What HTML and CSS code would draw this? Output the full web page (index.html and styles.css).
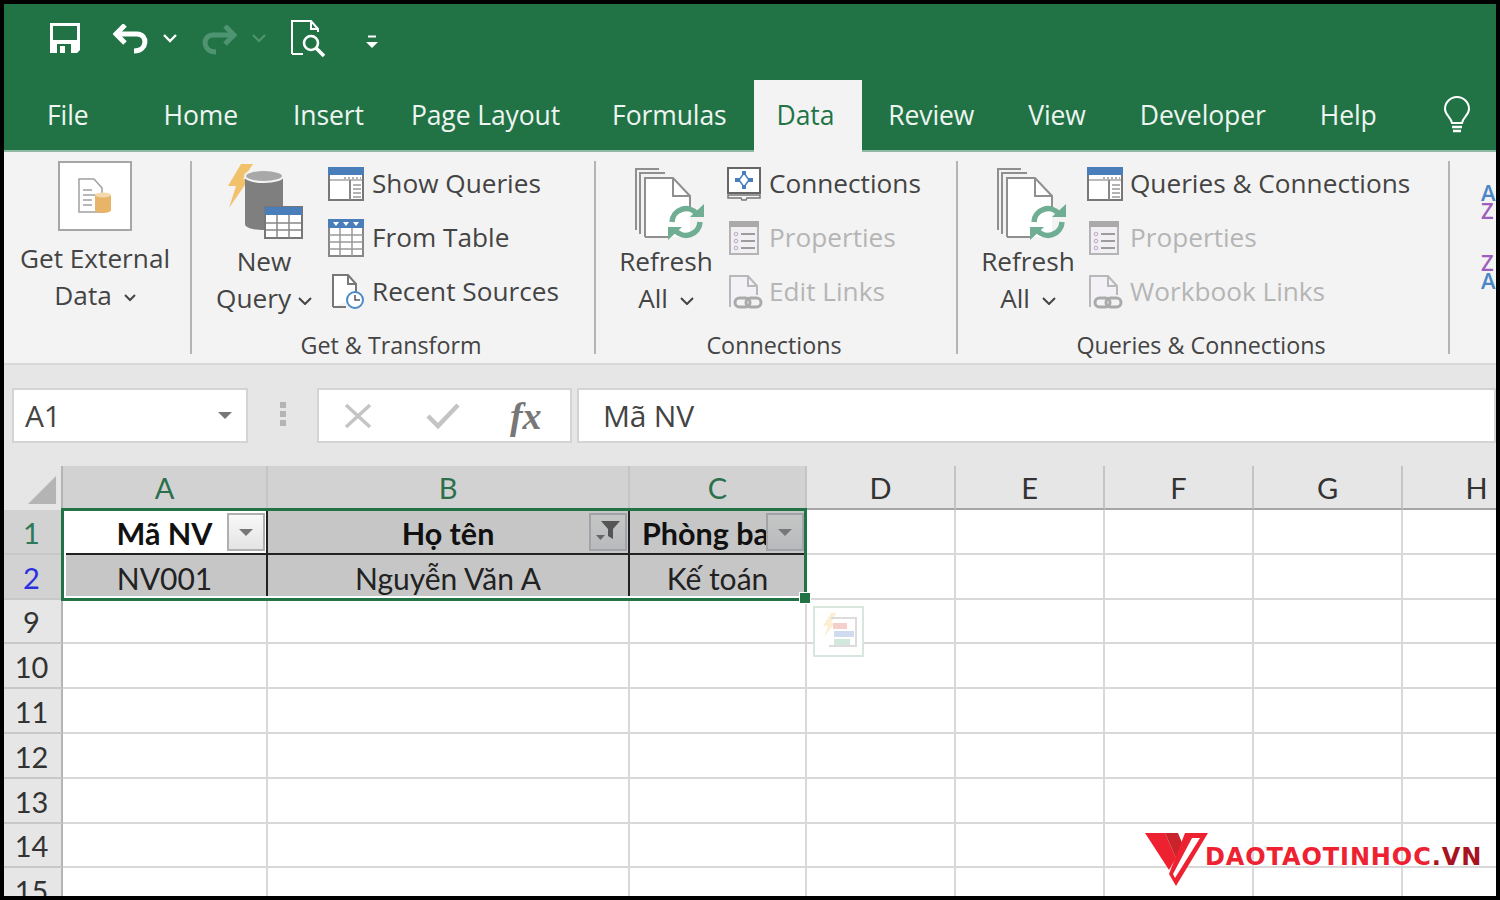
FILE: index.html
```html
<!DOCTYPE html>
<html lang="vi">

<head>
    <meta charset="UTF-8">
    <title>Excel - Data</title>
    <link rel="stylesheet" href="styles.css">
</head>

<body>
    <svg class="defs" width="0" height="0">
        <symbol id="refresh-doc" viewBox="0 0 72 72">
            <path d="M1 62V1H24M5 66V5H30" fill="none" stroke="#8f8f8f" stroke-width="2" />
            <path d="M10 69V10H38L55 28V69Z" fill="#fff" />
            <path d="M10 69V10H38L55 28V40M38 10V28H55M10 69H34" fill="none" stroke="#8f8f8f" stroke-width="2" />
            <path d="M37 54A14 14 0 0 1 62 46" fill="none" stroke="#6fae93" stroke-width="5.500" />
            <path d="M55 49H69V36Z" fill="#6fae93" />
            <path d="M65 54A14 14 0 0 1 40 62" fill="none" stroke="#6fae93" stroke-width="5.500" />
            <path d="M47 59H33V72Z" fill="#6fae93" />
        </symbol>
        <symbol id="queries" viewBox="0 0 36 34">
            <rect x="1" y="1" width="34" height="32" fill="#fff" stroke="#777" stroke-width="2" />
            <rect y="0" width="36" height="8" fill="#4a7ebb" />
            <path d="M2 13H34" stroke="#bbb" stroke-width="2" />
            <path d="M22 13V33" stroke="#888" stroke-width="2" />
            <path d="M25 18H33M25 22H33M25 26H33M25 30H33" stroke="#999" stroke-width="1.5" />
            <path d="M16 11H33" stroke="#999" stroke-width="1.5" stroke-dasharray="2 2" />
        </symbol>
        <symbol id="properties" viewBox="0 0 30 34">
            <rect x="1" y="1" width="28" height="32" fill="#f2eff4" stroke="#b4b4b4" stroke-width="2" />
            <rect width="30" height="6" fill="#aaa" />
            <path d="M12 13H26M12 20H26M12 27H26" stroke="#9c9c9c" stroke-width="2" />
            <circle cx="7" cy="13" r="1.8" fill="none" stroke="#b9a9c4" />
            <circle cx="7" cy="20" r="1.8" fill="none" stroke="#b9a9c4" />
            <circle cx="7" cy="27" r="1.8" fill="none" stroke="#b9a9c4" />
        </symbol>
        <symbol id="links" viewBox="0 0 34 34">
            <path d="M1 31V1H19L28 11V22H8V31Z" fill="#f4f1f6" />
            <path d="M1 32V1H19L28 11V20M19 1V11H28" fill="none" stroke="#b8b8b8" stroke-width="2" />
            <rect x="6" y="23" width="15" height="9" rx="4.5" fill="none" stroke="#aaa" stroke-width="3" />
            <rect x="17" y="23" width="15" height="9" rx="4.5" fill="none" stroke="#aaa" stroke-width="3" />
        </symbol>
    </svg>

    <div class="app">
        <div class="qat">
            <svg class="qat-save" width="30" height="30" viewBox="0 0 30 30">
                <path d="M0 0H30V27L27 30H0Z" fill="#fff" />
                <rect x="3" y="3" width="24" height="14" fill="#217346" />
                <rect x="7" y="21" width="14" height="9" fill="#217346" />
                <rect x="10" y="23" width="5" height="7" fill="#fff" />
            </svg>
            <svg class="qat-undo" width="36" height="30" viewBox="0 0 36 30">
                <path d="M3 10H24C35 10 35 27 21 27" fill="none" stroke="#fff" stroke-width="5" />
                <path d="M12 1L3 10L12 19" fill="none" stroke="#fff" stroke-width="5" />
            </svg>
            <svg class="chev qat-chev" width="14" height="9" viewBox="0 0 14 9">
                <path d="M1 1L7 7L13 1" fill="none" stroke="#fff" stroke-width="2.4" />
            </svg>
            <svg class="qat-redo" width="36" height="30" viewBox="0 0 36 30">
                <path d="M33 10H12C1 10 1 27 15 27" fill="none" stroke="#4f9470" stroke-width="5" />
                <path d="M24 1L33 10L24 19" fill="none" stroke="#4f9470" stroke-width="5" />
            </svg>
            <svg class="chev qat-chev-off" width="14" height="9" viewBox="0 0 14 9">
                <path d="M1 1L7 7L13 1" fill="none" stroke="#4f9470" stroke-width="2" />
            </svg>
            <svg class="qat-preview" width="38" height="38" viewBox="0 0 38 38">
                <path d="M1 34V1H20L27 9V12M20 1V9H27M1 34H12" fill="none" stroke="#fff" stroke-width="2" />
                <circle cx="20" cy="23" r="7" fill="none" stroke="#fff" stroke-width="2.6" />
                <path d="M25 28L33 36" stroke="#fff" stroke-width="3.5" />
            </svg>
            <svg class="qat-more" width="12" height="14" viewBox="0 0 12 14">
                <path d="M2 1.500H10" stroke="#fff" stroke-width="2" />
                <path d="M0 7H12L6 13Z" fill="#fff" />
            </svg>
        </div>

        <div class="tabs">
            <div class="tab tab-file">File</div>
            <div class="tab tab-home">Home</div>
            <div class="tab tab-insert">Insert</div>
            <div class="tab">Page Layout</div>
            <div class="tab">Formulas</div>
            <div class="tab active">Data</div>
            <div class="tab">Review</div>
            <div class="tab tab-nudge">View</div>
            <div class="tab tab-nudge">Developer</div>
            <div class="tab tab-nudge">Help</div>
            <svg class="bulb" width="28" height="40" viewBox="0 0 28 40">
                <path d="M9 27C8 21 2 19 2 13A12 12 0 0 1 26 13C26 19 20 21 19 27Z" fill="none" stroke="#fff" stroke-width="2" />
                <path d="M9 31H19M10 35H18" stroke="#fff" stroke-width="2.4" />
            </svg>
        </div>

        <div class="ribbon">
            <div class="group group-ext">
                <div class="group-body">
                    <div class="big-btn">
                        <div class="ext-box">
                            <svg width="34" height="36" viewBox="0 0 34 36">
                                <path d="M1 34V1H16L24 10V34Z" fill="#fff" stroke="#a0a0a0" stroke-width="1.500" />
                                <path d="M5 12H14M5 17H19M5 22H14M5 27H14" stroke="#a0a0a0" stroke-width="1.500" />
                                <path d="M17 17H33V32C33 36 17 36 17 32Z" fill="#e8b468" />
                                <ellipse cx="25" cy="17" rx="8" ry="2.500" fill="#f5d9ac" />
                            </svg>
                        </div>
                        <div class="big-label ext-label">Get External<br>Data <svg class="chev" width="12" height="8" viewBox="0 0 12 8"><path d="M1 1L6 6L11 1" fill="none" stroke="#444" stroke-width="2" /></svg></div>
                    </div>
                </div>
                <div class="group-label"></div>
            </div>

            <div class="group group-get">
                <div class="group-body">
                    <div class="big-btn">
                        <svg class="big-icon" width="78" height="78" viewBox="0 0 78 78">
                            <path d="M16 0H28L18 15H24L4 44L11 22H3Z" fill="#f1c26b" />
                            <path d="M20 12V60C20 68 58 68 58 60V12Z" fill="#7f7f7f" />
                            <ellipse cx="39" cy="12" rx="19" ry="6" fill="#a8a8a8" stroke="#f3f3f3" stroke-width="2" />
                            <rect x="40" y="43" width="37" height="31" fill="#fff" stroke="#777" stroke-width="2" />
                            <rect x="40" y="43" width="37" height="8" fill="#4a7ebb" />
                            <path d="M41 59H76M41 66H76M52 51V74M64 51V74" stroke="#888" stroke-width="1.500" />
                        </svg>
                        <div class="big-label">New<br>Query <svg class="chev" width="14" height="8" viewBox="0 0 14 8"><path d="M1 1L7 7L13 1" fill="none" stroke="#444" stroke-width="2" /></svg></div>
                    </div>
                    <div class="small-col">
                        <div class="small-item">
                            <span class="small-icon"><svg width="36" height="34"><use href="#queries" /></svg></span><span class="small-text">Show Queries</span>
                        </div>
                        <div class="small-item">
                            <span class="small-icon">
                                <svg width="36" height="38" viewBox="0 0 36 38">
                                    <rect x="1" y="1" width="34" height="36" fill="#fff" stroke="#888" stroke-width="2" />
                                    <rect width="36" height="9" fill="#4a7ebb" />
                                    <path d="M5 3H11L8 7ZM15 3H21L18 7ZM25 3H31L28 7Z" fill="#fff" />
                                    <path d="M1 16H35M1 23H35M1 30H35M12 9V37M24 9V37" stroke="#999" stroke-width="1.500" />
                                </svg>
                            </span><span class="small-text">From Table</span>
                        </div>
                        <div class="small-item">
                            <span class="small-icon">
                                <svg width="36" height="36" viewBox="0 0 36 36">
                                    <path d="M5 33V1H20L28 10V24" fill="#fff" stroke="#777" stroke-width="2" />
                                    <path d="M5 33H18M20 1V10H28" fill="none" stroke="#777" stroke-width="2" />
                                    <circle cx="27" cy="26" r="8" fill="#fff" stroke="#4a8cc7" stroke-width="2" />
                                    <path d="M27 21V26H32" fill="none" stroke="#555" stroke-width="1.500" />
                                </svg>
                            </span><span class="small-text">Recent Sources</span>
                        </div>
                    </div>
                </div>
                <div class="group-label">Get &amp; Transform</div>
            </div>

            <div class="group group-conn">
                <div class="group-body">
                    <div class="big-btn refresh-btn">
                        <svg class="big-icon" width="72" height="72"><use href="#refresh-doc" /></svg>
                        <div class="big-label">Refresh<br>All <svg class="chev" width="14" height="8" viewBox="0 0 14 8"><path d="M1 1L7 7L13 1" fill="none" stroke="#444" stroke-width="2" /></svg></div>
                    </div>
                    <div class="small-col">
                        <div class="small-item">
                            <span class="small-icon">
                                <svg width="36" height="34" viewBox="0 0 36 34">
                                    <rect x="1" y="1" width="32" height="25" fill="#fff" stroke="#666" stroke-width="2" />
                                    <path d="M1 28H33V31H20L19 33H15L14 31H1Z" fill="none" stroke="#777" stroke-width="1.500" />
                                    <path d="M17 6L22 13L17 20L12 13Z" fill="none" stroke="#4a7ebb" stroke-width="1.500" />
                                    <path d="M15 4H19V8H15ZM15 18H19V22H15ZM8 11H13V15H8ZM21 11H26V15H21Z" fill="#4a7ebb" />
                                </svg>
                            </span><span class="small-text">Connections</span>
                        </div>
                        <div class="small-item off">
                            <span class="small-icon"><svg class="off-icon" width="30" height="34"><use href="#properties" /></svg></span><span class="small-text">Properties</span>
                        </div>
                        <div class="small-item off">
                            <span class="small-icon"><svg class="off-icon" width="34" height="34"><use href="#links" /></svg></span><span class="small-text">Edit Links</span>
                        </div>
                    </div>
                </div>
                <div class="group-label">Connections</div>
            </div>

            <div class="group group-query">
                <div class="group-body">
                    <div class="big-btn refresh-btn">
                        <svg class="big-icon" width="72" height="72"><use href="#refresh-doc" /></svg>
                        <div class="big-label">Refresh<br>All <svg class="chev" width="14" height="8" viewBox="0 0 14 8"><path d="M1 1L7 7L13 1" fill="none" stroke="#444" stroke-width="2" /></svg></div>
                    </div>
                    <div class="small-col">
                        <div class="small-item">
                            <span class="small-icon"><svg width="36" height="34"><use href="#queries" /></svg></span><span class="small-text">Queries &amp; Connections</span>
                        </div>
                        <div class="small-item off">
                            <span class="small-icon"><svg class="off-icon" width="30" height="34"><use href="#properties" /></svg></span><span class="small-text">Properties</span>
                        </div>
                        <div class="small-item off">
                            <span class="small-icon"><svg class="off-icon" width="34" height="34"><use href="#links" /></svg></span><span class="small-text">Workbook Links</span>
                        </div>
                    </div>
                </div>
                <div class="group-label">Queries &amp; Connections</div>
            </div>

            <div class="sort-col">
                <div class="sort"><span class="blue">A</span><span class="purple">Z</span></div>
                <div class="sort"><span class="purple">Z</span><span class="blue">A</span></div>
            </div>
        </div>

        <div class="formula-row">
            <div class="name-box">A1<span class="drop"></span></div>
            <div class="grip"><i></i><i></i><i></i></div>
            <div class="fx-box">
                <svg width="30" height="26" viewBox="0 0 30 26">
                    <path d="M3 2L27 24M27 2L3 24" stroke="#c4c4c4" stroke-width="3.500" />
                </svg>
                <svg width="34" height="28" viewBox="0 0 34 28">
                    <path d="M2 14L12 24L32 3" fill="none" stroke="#c4c4c4" stroke-width="4.500" />
                </svg>
                <span class="fx">fx</span>
            </div>
            <div class="formula-input">Mã NV</div>
        </div>

        <div class="sheet">
            <div class="row head-row">
                <div class="corner"><span></span></div>
                <div class="col-head sel">A</div><div class="col-head sel">B</div><div class="col-head sel">C</div>
                <div class="col-head">D</div><div class="col-head">E</div><div class="col-head">F</div><div class="col-head">G</div><div class="col-head">H</div>
            </div>
            <div class="row">
                <div class="row-head sel green">1</div>
                <div class="cell first bold">Mã NV<span class="filter"><span class="drop"></span></span></div>
                <div class="cell picked bold">Họ tên<span class="filter on">
                    <svg width="26" height="24" viewBox="0 0 26 24">
                        <path d="M6 1H25L18 9V19L13 16V9Z" fill="#555" />
                        <path d="M1 15H10L5.500 20Z" fill="#666" />
                    </svg>
                </span></div>
                <div class="cell picked bold left">Phòng ban<span class="filter on"><span class="drop"></span></span></div>
                <div class="cell"></div><div class="cell"></div><div class="cell"></div><div class="cell"></div><div class="cell"></div>
            </div>
            <div class="row">
                <div class="row-head sel blue-num">2</div>
                <div class="cell picked">NV001</div>
                <div class="cell picked">Nguyễn Văn A</div>
                <div class="cell picked">Kế toán</div>
                <div class="cell"></div><div class="cell"></div><div class="cell"></div><div class="cell"></div><div class="cell"></div>
            </div>
            <div class="row"><div class="row-head">9</div><div class="cell"></div><div class="cell"></div><div class="cell"></div><div class="cell"></div><div class="cell"></div><div class="cell"></div><div class="cell"></div><div class="cell"></div></div>
            <div class="row"><div class="row-head">10</div><div class="cell"></div><div class="cell"></div><div class="cell"></div><div class="cell"></div><div class="cell"></div><div class="cell"></div><div class="cell"></div><div class="cell"></div></div>
            <div class="row"><div class="row-head">11</div><div class="cell"></div><div class="cell"></div><div class="cell"></div><div class="cell"></div><div class="cell"></div><div class="cell"></div><div class="cell"></div><div class="cell"></div></div>
            <div class="row"><div class="row-head">12</div><div class="cell"></div><div class="cell"></div><div class="cell"></div><div class="cell"></div><div class="cell"></div><div class="cell"></div><div class="cell"></div><div class="cell"></div></div>
            <div class="row"><div class="row-head">13</div><div class="cell"></div><div class="cell"></div><div class="cell"></div><div class="cell"></div><div class="cell"></div><div class="cell"></div><div class="cell"></div><div class="cell"></div></div>
            <div class="row"><div class="row-head">14</div><div class="cell"></div><div class="cell"></div><div class="cell"></div><div class="cell"></div><div class="cell"></div><div class="cell"></div><div class="cell"></div><div class="cell"></div></div>
            <div class="row"><div class="row-head">15</div><div class="cell"></div><div class="cell"></div><div class="cell"></div><div class="cell"></div><div class="cell"></div><div class="cell"></div><div class="cell"></div><div class="cell"></div></div>

            <div class="selection"><span class="handle"></span></div>
            <div class="quick">
                <svg width="36" height="38" viewBox="0 0 36 38">
                    <path d="M10 0H15L10 10H14L3 24L7 13H2Z" fill="#fbeed2" />
                    <path d="M10 5H35V33H8" fill="none" stroke="#dcdcdc" stroke-width="2" />
                    <rect x="12" y="10" width="14" height="6" fill="#f5cfcb" />
                    <rect x="13" y="18" width="20" height="6" fill="#cfdcf0" />
                    <rect x="13" y="26" width="16" height="6" fill="#d3e8dc" />
                </svg>
            </div>
            <div class="brand">
                <svg width="64" height="54" viewBox="0 0 64 54">
                    <path d="M0 1H20L31 26L24 38Z" fill="#ed2130" />
                    <path d="M20 1L33 1L38 13L31 26Z" fill="#c9242c" />
                    <path d="M40 1H63L31 54L24 42Z" fill="#ed2130" />
                    <path d="M47 6H55L30 46L28 42Z" fill="#fff" />
                </svg>
                <span class="brand-text">DAOTAOTINHOC<span class="brand-dark">.VN</span></span>
            </div>
        </div>
    </div>
</body>

</html>
```

FILE: styles.css
```css
html,
body {
    margin: 0;
    padding: 0;
    background-color: #000;
}

.defs {
    position: absolute;
}

.app {
    width: 1492px;
    height: 892px;
    margin: 4px;
    background-color: #fff;
    overflow: hidden;
    display: flex;
    flex-direction: column;
    font-family: "Open Sans", "Noto Sans", sans-serif;
    color: #444;
}

.chev {
    vertical-align: middle;
}

/* quick access */
.qat {
    height: 76px;
    flex: none;
    background-color: #217346;
    display: flex;
    align-items: center;
}

.qat-save {
    margin-left: 46px;
    margin-top: -8px;
}

.qat-undo {
    margin-left: 33px;
    margin-top: -6px;
}

.qat-chev {
    margin-left: 14px;
    margin-top: -8px;
}

.qat-redo {
    margin-left: 24px;
    margin-top: -4px;
}

.qat-chev-off {
    margin-left: 15px;
    margin-top: -8px;
}

.qat-preview {
    margin-left: 25px;
    margin-top: -6px;
}

.qat-more {
    margin-left: 37px;
    margin-top: -1px;
}

/* tabs */
.tabs {
    height: 72px;
    flex: none;
    padding-left: 17px;
    background-color: #217346;
    box-shadow: inset 0 -2px 0 #8fb9a3;
    display: flex;
    font-size: 26.5px;
    letter-spacing: -0.1px;
    color: #eef5f1;
}

.tab {
    padding: 0 26px;
    line-height: 70px;
}

.tab-file {
    margin-right: 22px;
}

.tab-home {
    margin-left: 1px;
    padding-right: 29px;
}

.tab-insert {
    margin-right: -5px;
}

.tab-nudge {
    margin-left: 2px;
}

.tab.active {
    margin-left: 1px;
    padding: 0 28px 0 23px;
    background-color: #f3f3f3;
    color: #217346;
}

.bulb {
    margin: 16px 0 0 40px;
}

/* ribbon */
.ribbon {
    height: 202px;
    flex: none;
    padding-top: 9px;
    background-color: #f3f3f3;
    border-bottom: 2px solid #d9d9d9;
    display: flex;
    font-size: 26.2px;
}

.group {
    height: 193px;
    box-sizing: border-box;
    border-right: 2px solid #b4b4b4;
    flex: none;
}

.group-ext {
    width: 188px;
}

.group-get {
    width: 404px;
}

.group-conn {
    width: 362px;
}

.group-query {
    width: 492px;
}

.group-body {
    height: 175px;
    padding-left: 24px;
    display: flex;
}

.group-ext .group-body {
    padding-left: 0;
}

.group-label {
    font-size: 23.3px;
    line-height: 18px;
    text-align: center;
    padding-right: 4px;
}

.big-btn {
    width: 96px;
    flex: none;
    display: flex;
    flex-direction: column;
    align-items: center;
}

.group-ext .big-btn {
    width: 182px;
}

.refresh-btn {
    width: 92px;
}

.ext-box {
    width: 74px;
    height: 70px;
    box-sizing: border-box;
    border: 2px solid #a6a6a6;
    background-color: #fff;
    display: flex;
    align-items: center;
    justify-content: center;
}

.big-icon {
    margin: 3px 0 1px;
}

.refresh-btn .big-icon {
    margin: 7px 0 3px 10px;
}

.big-label {
    line-height: 37px;
    text-align: center;
    white-space: nowrap;
}

.refresh-btn .chev,
.ext-label .chev {
    margin-left: 5px;
}

.ext-label {
    margin-top: 9px;
}

.small-col {
    margin-left: 16px;
    display: flex;
    flex-direction: column;
    gap: 8px;
}

.group-conn .small-col {
    margin-left: 15px;
}

.group-query .small-col {
    margin-left: 13px;
}

.small-item {
    height: 46px;
    display: flex;
    align-items: center;
    white-space: nowrap;
}

.small-text {
    margin-top: -2px;
}

.small-icon {
    width: 44px;
    flex: none;
    display: flex;
    align-items: center;
}

.group-conn .small-icon {
    width: 42px;
}

.group-query .small-icon {
    width: 43px;
}

.off {
    color: #b5b5b5;
}

.off-icon {
    margin-left: 2px;
}

.sort-col {
    padding: 22px 0 0 31px;
    display: flex;
    flex-direction: column;
    gap: 34px;
}

.sort {
    display: flex;
    flex-direction: column;
    font-size: 22px;
    font-weight: 600;
    line-height: 18px;
}

.blue {
    color: #4a86c5;
}

.purple {
    color: #9d5fbb;
}

/* formula bar */
.formula-row {
    height: 101px;
    flex: none;
    box-sizing: border-box;
    padding: 23px 0 0 8px;
    background-color: #e6e6e6;
    display: flex;
    align-items: flex-start;
    font-size: 30px;
    letter-spacing: -0.2px;
}

.name-box,
.fx-box,
.formula-input {
    height: 55px;
    box-sizing: border-box;
    background-color: #fff;
    border: 2px solid #d4d4d4;
    display: flex;
    align-items: center;
}

.name-box {
    width: 236px;
    padding: 0 14px 0 11px;
    justify-content: space-between;
}

.drop {
    width: 0;
    height: 0;
    border-left: 7px solid transparent;
    border-right: 7px solid transparent;
    border-top: 7px solid #777;
}

.grip {
    width: 69px;
    padding-top: 14px;
    display: flex;
    flex-direction: column;
    align-items: center;
    gap: 3px;
}

.grip i {
    width: 6px;
    height: 6px;
    background-color: #b4b4b4;
}

.fx-box {
    width: 255px;
    padding-left: 24px;
}

.fx-box svg + svg {
    margin-left: 53px;
}

.fx {
    margin-left: 50px;
    font-family: "Liberation Serif", serif;
    font-style: italic;
    font-weight: 700;
    font-size: 38px;
    color: #777;
    line-height: 1;
}

.formula-input {
    flex: 1;
    margin-left: 5px;
    padding-left: 24px;
}

/* sheet */
.sheet {
    flex: 1;
    position: relative;
    overflow: hidden;
    font-family: Lato, "Noto Sans", sans-serif;
    font-size: 29px;
    color: #222;
}

.row {
    height: 44.8px;
    display: grid;
    grid-template-columns: 59px 205px 362px 177px 149px 149px 149px 149px 149px;
}

.head-row {
    height: 44px;
}

.corner,
.col-head,
.row-head {
    background-color: #e6e6e6;
    box-sizing: border-box;
    display: flex;
    align-items: center;
    justify-content: center;
    color: #333;
}

.corner {
    border-right: 2px solid #b4b4b4;
    align-items: flex-end;
    justify-content: flex-end;
    padding: 0 5px 6px 0;
}

.corner span {
    width: 0;
    height: 0;
    border-left: 28px solid transparent;
    border-bottom: 28px solid #b4b4b4;
}

.col-head {
    border-right: 2px solid #c4c4c4;
    border-bottom: 2px solid #a6a6a6;
}

.col-head.sel {
    background-color: #d2d2d2;
    color: #2b6f4d;
}

.row-head {
    padding: 2px 2px 0 0;
    border-right: 2px solid #b4b4b4;
    border-bottom: 2px solid #c8c8c8;
}

.row-head.sel {
    background-color: #d2d2d2;
}

.green {
    color: #2b7a58;
}

.blue-num {
    color: #2a2fe0;
}

.cell {
    box-sizing: border-box;
    position: relative;
    padding-top: 3px;
    border-right: 2px solid #d8d8d8;
    border-bottom: 2px solid #d8d8d8;
    display: flex;
    align-items: center;
    justify-content: center;
    white-space: nowrap;
    overflow: hidden;
    font-size: 30px;
}

.picked {
    background-color: #c6c6c6;
    border-right-color: #222;
    border-bottom-color: #c6c6c6;
}

.row:nth-child(2) .cell:nth-child(-n+4) {
    border-bottom-color: #222;
}

.cell.first {
    border-right-color: #222;
}

.cell.bold {
    font-size: 30.5px;
    font-weight: 700;
    color: #111;
}

.left {
    justify-content: flex-start;
    padding-left: 12px;
}

.filter {
    position: absolute;
    top: 3px;
    right: 1px;
    width: 38px;
    height: 38px;
    box-sizing: border-box;
    border: 2px solid #b0b0b0;
    background: linear-gradient(#f8f8f8, #e4e4e4);
    display: flex;
    align-items: center;
    justify-content: center;
}

.filter.on {
    background: linear-gradient(#c6c6c6, #b8babc);
    border-color: #a0a4a8;
}

.selection {
    position: absolute;
    left: 57px;
    top: 42px;
    width: 746px;
    height: 93px;
    box-sizing: border-box;
    border: 3px solid #217346;
    box-shadow: inset 2px -2px 0 #fff;
}

.handle {
    position: absolute;
    right: -7px;
    bottom: -6px;
    width: 10px;
    height: 10px;
    background-color: #217346;
    border: 1px solid #fff;
}

.quick {
    position: absolute;
    left: 809px;
    top: 140px;
    width: 51px;
    height: 51px;
    box-sizing: border-box;
    border: 2px solid #d8e6de;
    background-color: #fff;
    display: flex;
    align-items: center;
    justify-content: center;
}

.brand {
    position: absolute;
    left: 1141px;
    top: 366px;
    display: flex;
    align-items: center;
}

.brand-text {
    margin: -4px 0 0 -4px;
    font-family: "DejaVu Sans", sans-serif;
    font-size: 24px;
    font-weight: 700;
    letter-spacing: 0.9px;
    line-height: 1;
    color: #ed2130;
}

.brand-dark {
    color: #a8141e;
}
```
